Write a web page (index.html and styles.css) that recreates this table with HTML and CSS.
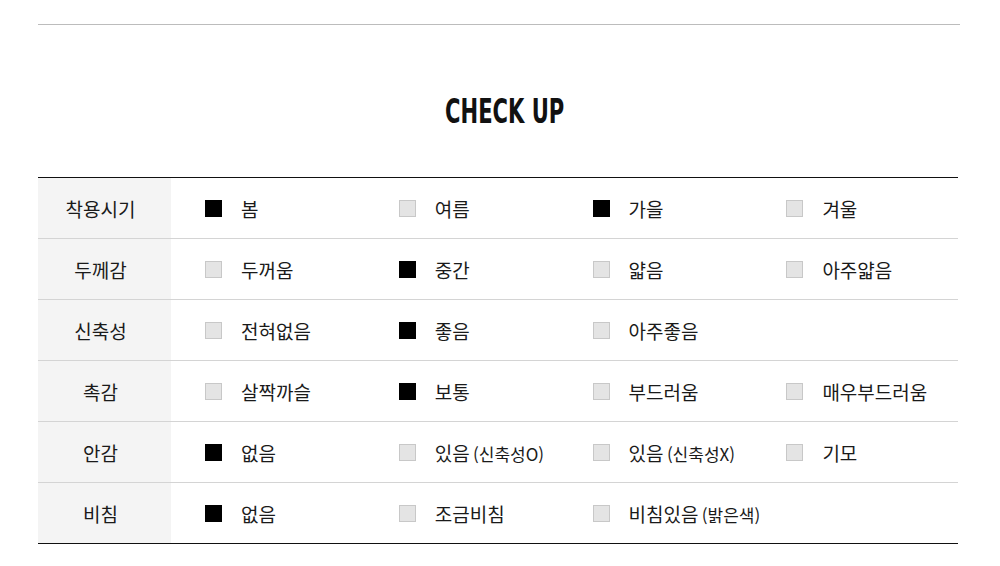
FILE: index.html
```html
<!DOCTYPE html>
<html lang="ko">
<head>
<meta charset="utf-8">
<link rel="stylesheet" href="styles.css">
</head>
<body>
<div class="wrap">
  <div class="topline"></div>
  <h2 class="title">CHECK UP</h2>
  <div class="table">
    <div class="row">
      <div class="label">착용시기</div>
      <div class="opts">
        <div class="opt"><span class="box on"></span><span class="txt">봄</span></div>
        <div class="opt"><span class="box"></span><span class="txt">여름</span></div>
        <div class="opt"><span class="box on"></span><span class="txt">가을</span></div>
        <div class="opt"><span class="box"></span><span class="txt">겨울</span></div>
      </div>
    </div>
    <div class="row">
      <div class="label">두께감</div>
      <div class="opts">
        <div class="opt"><span class="box"></span><span class="txt">두꺼움</span></div>
        <div class="opt"><span class="box on"></span><span class="txt">중간</span></div>
        <div class="opt"><span class="box"></span><span class="txt">얇음</span></div>
        <div class="opt"><span class="box"></span><span class="txt">아주얇음</span></div>
      </div>
    </div>
    <div class="row">
      <div class="label">신축성</div>
      <div class="opts">
        <div class="opt"><span class="box"></span><span class="txt">전혀없음</span></div>
        <div class="opt"><span class="box on"></span><span class="txt">좋음</span></div>
        <div class="opt"><span class="box"></span><span class="txt">아주좋음</span></div>
      </div>
    </div>
    <div class="row">
      <div class="label">촉감</div>
      <div class="opts">
        <div class="opt"><span class="box"></span><span class="txt">살짝까슬</span></div>
        <div class="opt"><span class="box on"></span><span class="txt">보통</span></div>
        <div class="opt"><span class="box"></span><span class="txt">부드러움</span></div>
        <div class="opt"><span class="box"></span><span class="txt">매우부드러움</span></div>
      </div>
    </div>
    <div class="row">
      <div class="label">안감</div>
      <div class="opts">
        <div class="opt"><span class="box on"></span><span class="txt">없음</span></div>
        <div class="opt"><span class="box"></span><span class="txt">있음 <small>(신축성O)</small></span></div>
        <div class="opt"><span class="box"></span><span class="txt">있음 <small>(신축성X)</small></span></div>
        <div class="opt"><span class="box"></span><span class="txt">기모</span></div>
      </div>
    </div>
    <div class="row">
      <div class="label">비침</div>
      <div class="opts">
        <div class="opt"><span class="box on"></span><span class="txt">없음</span></div>
        <div class="opt"><span class="box"></span><span class="txt">조금비침</span></div>
        <div class="opt"><span class="box"></span><span class="txt">비침있음 <small>(밝은색)</small></span></div>
      </div>
    </div>
  </div>
</div>
</body>
</html>
```

FILE: styles.css
```css
html, body {
  margin: 0;
  padding: 0;
  background: #fff;
}
body {
  font-family: "Noto Sans CJK KR", "Noto Sans", sans-serif;
  color: #111;
}
.wrap {
  padding-top: 24px;
  padding-left: 38px;
  width: 922px;
}
.topline {
  height: 1px;
  background: #bcbcbc;
}
.title {
  margin: 0;
  height: 152px;
  display: flex;
  align-items: center;
  justify-content: center;
  padding-left: 16px;
  padding-top: 21px;
  box-sizing: border-box;
  font-family: "DejaVu Sans Condensed", sans-serif;
  font-weight: bold;
  font-size: 33px;
  letter-spacing: 0;
  color: #111;
  transform: scaleX(0.71);
}
.table {
  width: 920px;
  border-top: 1px solid #111;
  border-bottom: 1px solid #111;
}
.row {
  display: flex;
  height: 60px;
  border-bottom: 1px solid #d4d4d4;
}
.row:last-child {
  border-bottom: none;
}
.label {
  flex: none;
  width: 125px;
  padding-right: 8px;
  background: #f4f4f4;
  display: flex;
  align-items: center;
  justify-content: center;
  font-size: 19px;
  color: #1a1a1a;
}
.opts {
  flex: 1;
  display: grid;
  grid-template-columns: repeat(3, 193.8px) 1fr;
  padding-left: 34px;
  align-items: center;
}
.opt {
  display: flex;
  align-items: center;
}
.box {
  width: 17px;
  height: 17px;
  box-sizing: border-box;
  background: #e4e4e4;
  border: 1px solid #c8c8c8;
  margin-right: 19px;
  flex: none;
}
.box.on {
  background: #000;
  border-color: #000;
}
.txt {
  font-size: 19px;
  color: #1a1a1a;
  white-space: nowrap;
}
.txt small {
  font-size: 17px;
  letter-spacing: 0;
  margin-left: -2px;
}
```
